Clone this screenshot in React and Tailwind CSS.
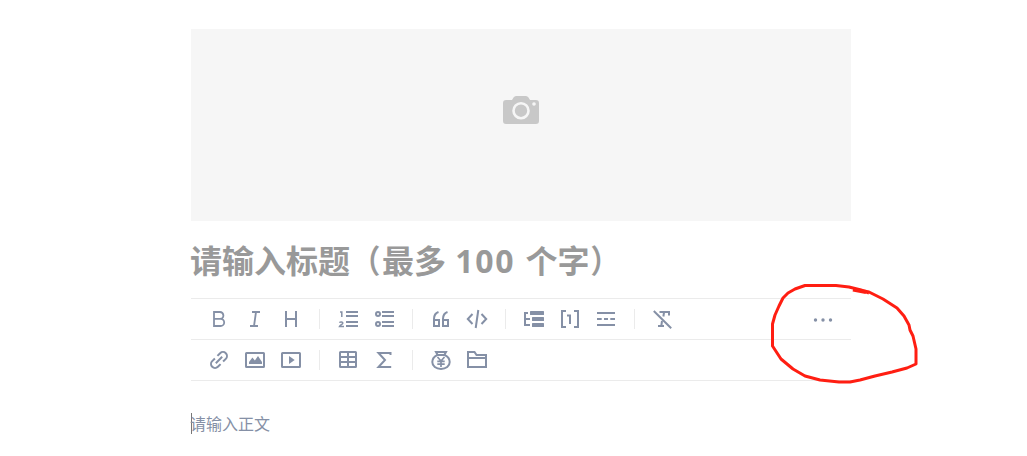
import React from 'react'

const line = {
  fill: "none",
  stroke: "currentColor",
  strokeWidth: 2,
}

const icons = {
  bold: <path {...line} strokeWidth="1.8" d="M7 5h6a3.400 3.400 0 0 1 0 6.800H7zM7 11.800h6.600a3.600 3.600 0 0 1 0 7.200H7z" />,
  italic: <path {...line} strokeWidth="1.8" d="M9 5h8M7 19h8M13 5l-2 14" />,
  heading: <path {...line} d="M7 4v16M17 4v16M7 12h10" />,
  ordered: (
    <>
      <path {...line} d="M10 5h12M10 9h12M10 15h12M10 19h12" />
      <path {...line} strokeWidth="1.5" d="M4 5h1.8v5M3.4 15.6c.8-1 3.6-.9 3.4.6-.1 1-2.400 1.800-3.200 3.200H8" />
    </>
  ),
  bullets: (
    <>
      <path {...line} d="M10 5h12M10 9h12M10 15h12M10 19h12" />
      <circle {...line} cx="6" cy="7" r="2" />
      <circle {...line} cx="6" cy="17" r="2" />
    </>
  ),
  quote: <path {...line} d="M9.5 5C6.5 6 5 8.5 5 12v7h5v-6H5M18.5 5C15.5 6 14 8.5 14 12v7h5v-6h-5" />,
  code: <path {...line} d="M7.5 7L2.8 12l4.7 5M16.5 7l4.7 5-4.7 5M13.3 3l-2.6 18" />,
  outline: (
    <>
      <path {...line} d="M6 6H3v12h5M3 12h5" />
      <rect x="8" y="4" width="14" height="4" rx=".5" />
      <rect x="10" y="10" width="12" height="4" rx=".5" />
      <rect x="10" y="16" width="12" height="4" rx=".5" />
    </>
  ),
  footnote: <path {...line} d="M8 4H4v16h4M16 4h4v16h-4M9 8.500h3V17" />,
  divider: <path {...line} d="M3 6h18M3 18h18M3 12h4.700M10 12h4M16.300 12H21" />,
  clear: (
    <>
      <path {...line} d="M8.500 5H18v3.500M13 5.500l-.6 4M11 14l-.7 5M7 19h6" />
      <path {...line} d="M2.800 4l17.400 17.300" />
    </>
  ),
  link: (
    <path
      {...line}
      transform="rotate(-45 12 12)"
      d="M13.800 8h3.800a4 4 0 0 1 0 8h-3.800M10.200 16H6.400a4 4 0 0 1 0-8h3.800M7.500 12h9"
    />
  ),
  image: (
    <>
      <rect {...line} x="3" y="5" width="18" height="14" rx=".5" />
      <path d="M6 16v-2l3.400-4.500 2.500 3L15 8l4 6v2z" />
    </>
  ),
  video: (
    <>
      <rect {...line} x="3" y="5" width="18" height="14" rx=".5" />
      <path d="M10 8l5.700 4-5.700 4z" />
    </>
  ),
  table: (
    <>
      <rect {...line} x="4" y="4" width="16" height="15" rx=".5" />
      <path {...line} d="M4 9h16M4 14h16M12 4v15" />
    </>
  ),
  sigma: <path {...line} d="M18.500 7V5H6.500l6.500 7-6.500 7h12.700" />,
  money: (
    <>
      <path {...line} d="M7 4h10l-1.700 3H8.700zM8.500 7C5 8.500 3.300 11.200 3.300 14c0 4.200 3.700 7 8.700 7s8.700-2.800 8.700-7c0-2.800-1.700-5.500-5.200-7" />
      <path {...line} strokeWidth="1.700" d="M8.500 9l3.500 4 3.500-4M8.300 13.300h7.400M8.300 16.200h7.400M12 12.500V19" />
    </>
  ),
  folder: <path {...line} d="M3 19V4h6.500l2 3H21v12zM3 10h18" />,
  more: (
    <>
      <circle cx="4.500" cy="13" r="1.700" />
      <circle cx="12" cy="13" r="1.700" />
      <circle cx="19.500" cy="13" r="1.700" />
    </>
  ),
}

const topRow = [
  ["bold", "italic", "heading"],
  ["ordered", "bullets"],
  ["quote", "code"],
  ["outline", "footnote", "divider"],
  ["clear"],
]

const bottomRow = [
  ["link", "image", "video"],
  ["table", "sigma"],
  ["money", "folder"],
]

const ToolButton = ({ name }) => (
  <button type="button" aria-label={name} className="flex h-10 w-9 items-center justify-center text-[#8590a6]">
    <svg viewBox="0 0 24 24" className="h-6 w-6" fill="currentColor">{icons[name]}</svg>
  </button>
)

const ToolRow = ({ groups, children }) => (
  <div className="flex h-[41px] items-center border-b border-[#ebebeb] px-2.5">
    {groups.map((group, i) => (
      <React.Fragment key={i}>
        {i > 0 && <span className="mx-2.5 h-5 w-px bg-[#ebebeb]" />}
        {group.map((name) => <ToolButton key={name} name={name} />)}
      </React.Fragment>
    ))}
    {children}
  </div>
)

const Editor = () => {
  return (
    <div className="relative h-[456px] w-[1027px] overflow-hidden bg-white pl-[191px] pt-[29px] font-['Open_Sans','Noto_Sans_CJK_SC',sans-serif]">
      <div className="w-[660px]">
        <div className="flex h-48 justify-center bg-[#f6f6f6] pt-[67px]">
          <svg viewBox="0 0 36 28" className="h-7 w-9">
            <path fill="#c8c8c8" d="M3 4h6l1.500-2.500Q11.500 0 13 0h10q1.500 0 2.500 1.500L27 4h6q3 0 3 3v18q0 3-3 3H3q-3 0-3-3V7q0-3 3-3z" />
            <circle cx="18" cy="14.700" r="7.500" fill="#c8c8c8" stroke="#f6f6f6" strokeWidth="2.600" />
            <circle cx="31" cy="8" r="1.800" fill="#f6f6f6" />
          </svg>
        </div>
        <h1 className="-ml-px mt-4 h-12 whitespace-nowrap text-[32px] font-bold leading-[48px] text-[#999]">
          请输入标题<span className="inline-block scale-x-90">（</span>最多 <span className="ml-px tracking-[1.7px]">100 </span>个字<span className="inline-block scale-x-90">）</span>
        </h1>
        <div className="mt-[13px] border-t border-[#ebebeb]">
          <ToolRow groups={topRow}>
            <div className="ml-auto"><ToolButton name="more" /></div>
          </ToolRow>
          <ToolRow groups={bottomRow} />
        </div>
        <div className="mt-8 flex h-[22px] items-start">
          <span className="-mr-px h-[21px] w-px bg-[#777]" />
          <p className="-ml-px text-base leading-[22px] text-[#8590a6]">请输入正文</p>
        </div>
      </div>

      {/* hand drawn marker around the "more" button */}
      <svg viewBox="0 0 170 115" className="absolute left-[760px] top-[275px] h-[115px] w-[170px]" fill="none" stroke="#ff1e12" strokeWidth="3" strokeLinejoin="round">
        <path d="M94 14L109 17L123 24L137 33L144 41L149 50L150 55L153 61L156 74V89L147 93L132 97L115 101L100 105L90 107L79 107L60 105L45 101L33 94L21 84L12.500 71V49L15 40L19 31L23 23L28 18L35 14L45 10.500H76L89 12L101 15L109 18" />
        <path d="M93 14.500L106 17" strokeWidth="4" />
      </svg>
    </div>
  )
}

export default Editor
